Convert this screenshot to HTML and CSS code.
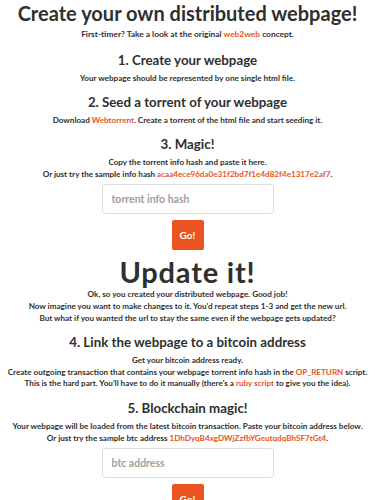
FILE: index.html
```html
<!DOCTYPE html>
<html lang="en">
<head>
<link rel="stylesheet" href="styles.css">
</head>
<body>
<div class="page">
  <h1 class="title">Create your own distributed webpage!</h1>
  <p class="intro">First-timer? Take a look at the original <a href="#">web2web</a> concept.</p>

  <h2>1. Create your webpage</h2>
  <p>Your webpage should be represented by one single html file.</p>

  <h2>2. Seed a torrent of your webpage</h2>
  <p>Download <a href="#">Webtorrent</a>. Create a torrent of the html file and start seeding it.</p>

  <h2>3. Magic!</h2>
  <p class="before-form">Copy the torrent info hash and paste it here.<br>
    Or just try the sample info hash <a href="#">acaa4ece96da0e31f2bd7f1e4d82f4e1317e2af7</a>.</p>
  <form class="go-form">
    <input type="text" placeholder="torrent info hash">
    <button type="button">Go!</button>
  </form>

  <h1 class="update">Update it!</h1>
  <p class="after-update">Ok, so you created your distributed webpage. Good job!<br>
    Now imagine you want to make changes to it. You'd repeat steps 1-3 and get the new url.<br>
    But what if you wanted the url to stay the same even if the webpage gets updated?</p>

  <h2>4. Link the webpage to a bitcoin address</h2>
  <p class="tight">Get your bitcoin address ready.<br>
    Create outgoing transaction that contains your webpage torrent info hash in the <a href="#">OP_RETURN</a> script.<br>
    This is the hard part. You'll have to do it manually (there's a <a href="#">ruby script</a> to give you the idea).</p>

  <h2>5. Blockchain magic!</h2>
  <p class="before-form">Your webpage will be loaded from the latest bitcoin transaction. Paste your bitcoin address below.<br>
    Or just try the sample btc address <a href="#">1DhDyqB4xgDWjZzfbYGeutqdqBhSF7tGt4</a>.</p>
  <form class="go-form">
    <input type="text" placeholder="btc address">
    <button type="button">Go!</button>
  </form>
</div>
</body>
</html>
```

FILE: styles.css
```css
* {
  box-sizing: border-box;
}
body {
  margin: 0;
  background-color: #ffffff;
  color: #2f2f2f;
  font-family: Lato, 'Liberation Sans', sans-serif;
}
.page {
  text-align: center;
  white-space: nowrap;
}
a {
  color: #e95420;
  text-decoration: none;
}
h1 {
  font-weight: 700;
  margin: 0;
}
.title {
  font-size: 20px;
  line-height: 26px;
}
.update {
  font-size: 29px;
  line-height: 32px;
  letter-spacing: 0.8px;
  margin-top: 6px;
}
h2 {
  font-size: 13.3px;
  line-height: 20px;
  font-weight: 700;
  margin: 0;
}
p {
  font-size: 8.1px;
  line-height: 12px;
  font-weight: 700;
  margin: 2px 0 8px;
}
.intro {
  font-size: 8.4px;
  margin: 2px 0 10px;
}
.after-update {
  margin-top: 0;
}
.tight {
  line-height: 11.5px;
  margin-top: 3px;
}
p.before-form {
  margin-bottom: 4px;
}
.go-form {
  display: flex;
  flex-direction: column;
  align-items: center;
  gap: 6px;
}
.go-form input {
  width: 172px;
  height: 30px;
  padding: 0 9px;
  border: 1px solid #dddddd;
  border-radius: 3px;
  font-family: inherit;
  font-size: 10.5px;
  font-weight: 700;
  color: #333;
  background: #fff;
}
.go-form input::placeholder {
  color: #a39e9a;
}
.go-form button {
  width: 32px;
  height: 30px;
  padding: 0;
  border: none;
  border-radius: 2px;
  background-color: #e95420;
  color: #ffffff;
  font-family: inherit;
  font-size: 10px;
  font-weight: 700;
}
```
